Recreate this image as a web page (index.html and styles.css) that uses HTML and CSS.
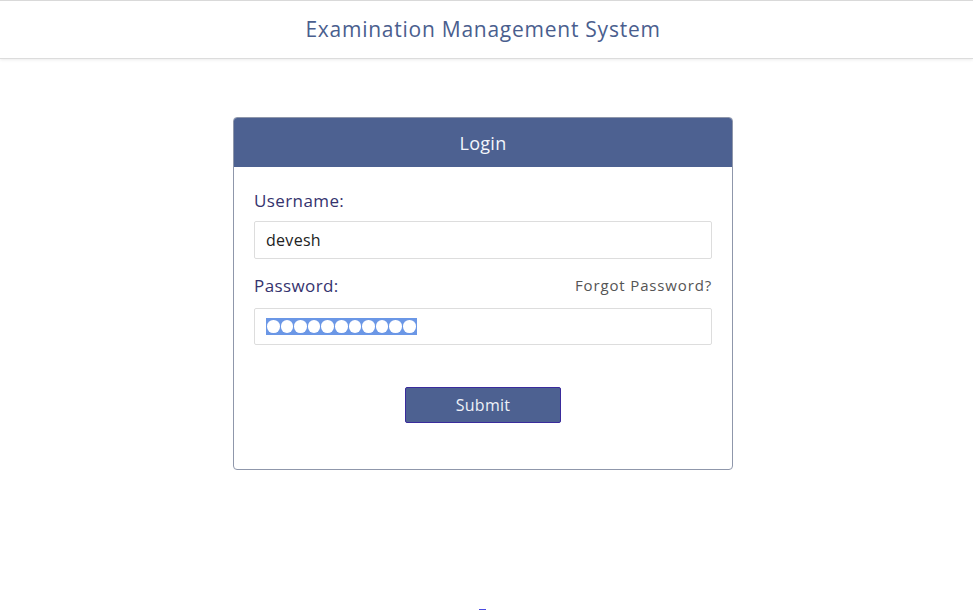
FILE: index.html
```html
<!DOCTYPE html>
<html>
<head>
<meta charset="utf-8">
<link rel="stylesheet" href="styles.css">
</head>
<body>
<header class="topbar">
  <h1 class="title">Examination Management System</h1>
</header>
<main class="main">
  <section class="card">
    <div class="card-head">Login</div>
    <form class="card-body">
      <div class="label-row"><span class="label">Username:</span></div>
      <div class="field field-first"><span class="value">devesh</span></div>
      <div class="label-row"><span class="label">Password:</span><a class="forgot">Forgot Password?</a></div>
      <div class="field field-second"><span class="dots"><span class="dot"></span><span class="dot"></span><span class="dot"></span><span class="dot"></span><span class="dot"></span><span class="dot"></span><span class="dot"></span><span class="dot"></span><span class="dot"></span><span class="dot"></span><span class="dot"></span></span></div>
      <div class="actions"><button type="button" class="submit">Submit</button></div>
    </form>
  </section>
</main>
<div class="footer-mark"><span class="mark"></span></div>
</body>
</html>
```

FILE: styles.css
```css
* { box-sizing: border-box; }
html, body { margin: 0; padding: 0; background: #fff; }
body {
  font-family: "Open Sans", "Liberation Sans", sans-serif;
  width: 973px;
  height: 613px;
  overflow: hidden;
  position: relative;
}
.topbar {
  height: 59px;
  border-top: 1px solid #d9d9d9;
  border-bottom: 1px solid #dcdcdc;
  box-shadow: 0 1px 3px rgba(0,0,0,0.08);
  display: flex;
  align-items: center;
  justify-content: center;
  padding-right: 7px;
}
.title {
  margin: 0;
  font-weight: 400;
  font-size: 21px;
  letter-spacing: 0.75px;
  color: #4a5e8e;
  padding-bottom: 2px;
}
.main {
  display: flex;
  justify-content: center;
  padding-top: 58px;
  padding-right: 7px;
}
.card {
  width: 500px;
  height: 353px;
  border: 1px solid #8f97ab;
  border-radius: 4px;
  overflow: hidden;
}
.card-head {
  height: 49px;
  background: #4d6191;
  color: #f3f5fb;
  font-size: 18px;
  display: flex;
  align-items: center;
  justify-content: center;
  letter-spacing: 0.3px;
}
.card-body {
  padding: 19px 20px 0 20px;
  display: flex;
  flex-direction: column;
  margin: 0;
}
.label-row {
  display: flex;
  justify-content: space-between;
  align-items: center;
  height: 28px;
}
.label {
  color: #35336e;
  font-size: 17px;
  letter-spacing: 0.4px;
}
.forgot {
  color: #555;
  font-size: 15px;
  letter-spacing: 0.85px;
}
.field {
  margin-top: 7px;
  height: 38px;
  border: 1px solid #ddd;
  border-radius: 2px;
  display: flex;
  align-items: center;
  padding-left: 11px;
}
.field-first { margin-bottom: 12px; }
.field-second { margin-top: 9px; height: 37px; }
.value {
  font-size: 16px;
  color: #222;
  letter-spacing: 0.3px;
}
.dots {
  display: flex;
  background: #6b97e6;
  height: 17px;
  align-items: center;
  padding: 0 1px;
  gap: 1px;
}
.dot {
  width: 12.6px;
  height: 12.6px;
  border-radius: 50%;
  background: #fff;
}
.actions {
  display: flex;
  justify-content: center;
  margin-top: 42px;
}
.submit {
  width: 156px;
  height: 36px;
  background: #4d6191;
  border: 1px solid #3a2b9c;
  border-radius: 2px;
  color: #eef1f8;
  font-family: inherit;
  font-size: 16px;
  letter-spacing: 0.3px;
}
.footer-mark {
  position: absolute;
  left: 0;
  right: 0;
  top: 609px;
  display: flex;
  justify-content: center;
  padding-right: 7px;
}
.mark {
  width: 7px;
  height: 1px;
  background: #4a4ae0;
  margin-left: -1px;
}
```
